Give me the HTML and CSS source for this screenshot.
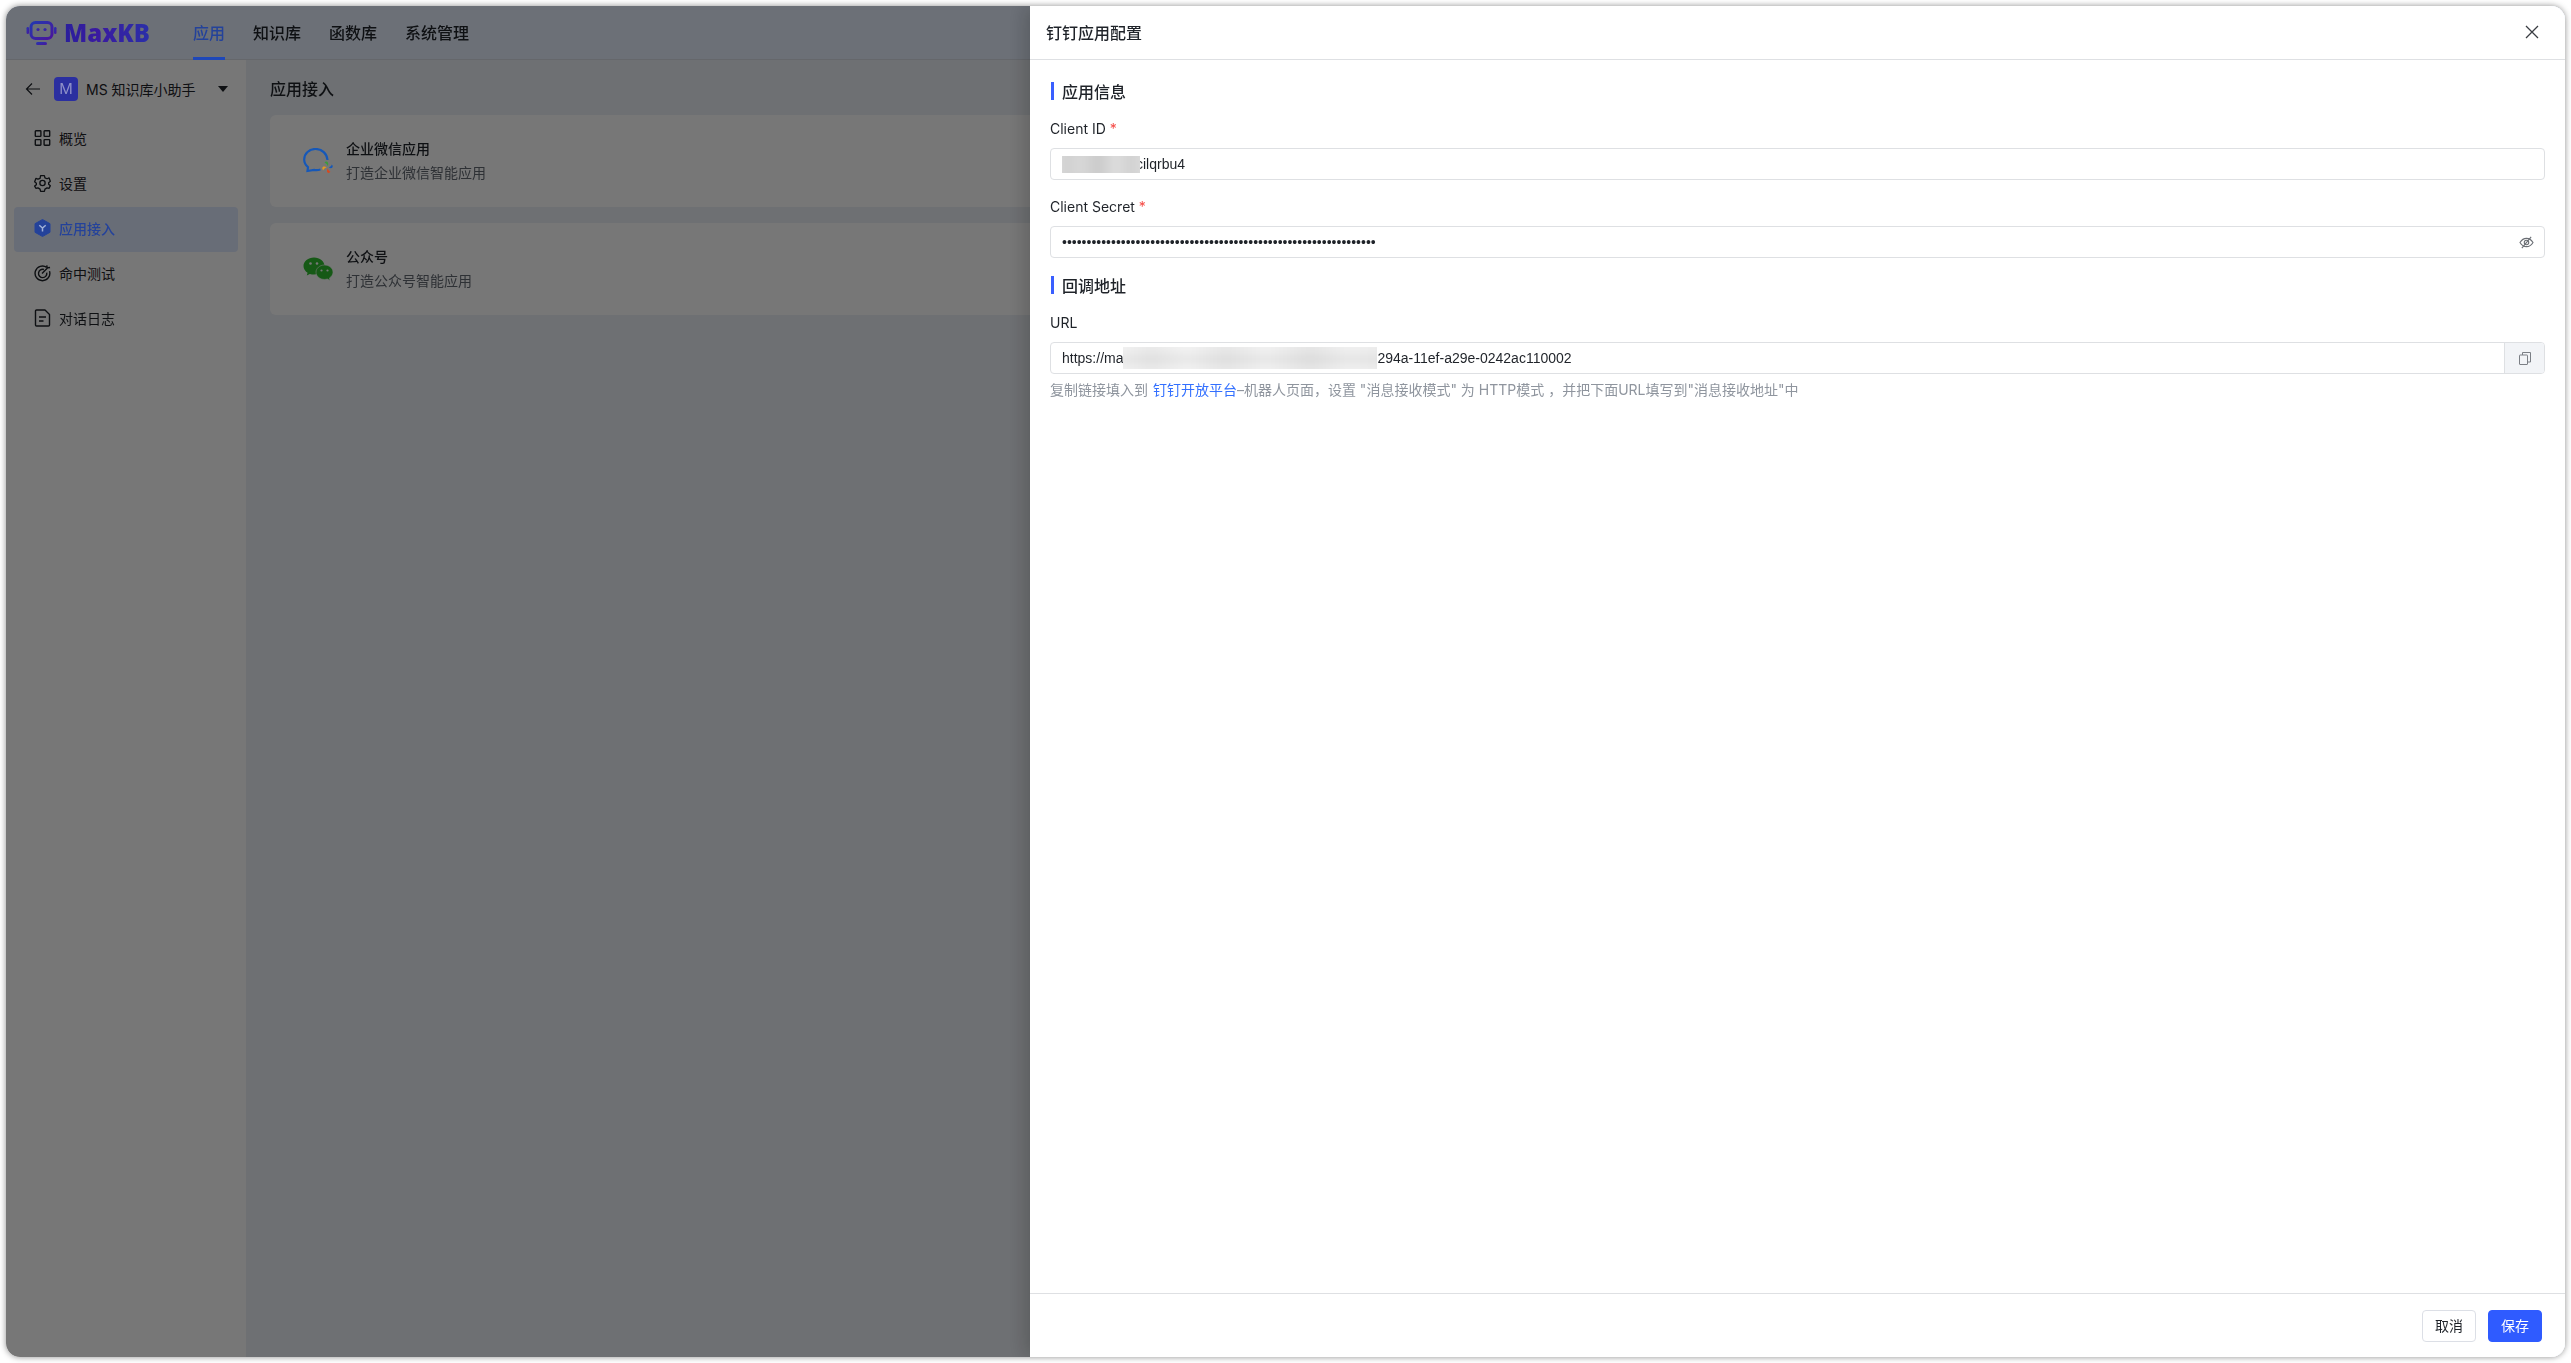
FILE: index.html
```html
<!DOCTYPE html>
<html lang="zh-CN">
<head>
<meta charset="utf-8">
<title>MaxKB</title>
<link rel="stylesheet" href="styles.css">
</head>
<body>
<div class="window">
  <header class="topbar">
    <div class="logo lift">
      <svg class="logo-icon" viewBox="0 0 31 24" width="31" height="24">
        <defs><linearGradient id="lg" x1="0" y1="0" x2="1" y2="1"><stop offset="0" stop-color="#2438b0"/><stop offset="1" stop-color="#4a149c"/></linearGradient></defs>
        <rect x="5" y="1.5" width="21" height="16" rx="4.5" fill="none" stroke="url(#lg)" stroke-width="3"/>
        <rect x="0.5" y="6" width="2.5" height="7" rx="1.2" fill="url(#lg)"/>
        <rect x="28" y="6" width="2.5" height="7" rx="1.2" fill="url(#lg)"/>
        <circle cx="12" cy="8.5" r="1.6" fill="url(#lg)"/>
        <circle cx="19" cy="8.5" r="1.6" fill="url(#lg)"/>
        <path d="M15.5 18v3" stroke="url(#lg)" stroke-width="3"/>
        <rect x="10" y="21" width="11" height="3" rx="1.5" fill="url(#lg)"/>
      </svg>
      <span class="logo-text">MaxKB</span>
    </div>
    <nav class="nav">
      <a class="nav-item is-active lift">应用</a>
      <a class="nav-item">知识库</a>
      <a class="nav-item">函数库</a>
      <a class="nav-item">系统管理</a>
    </nav>
  </header>
  <div class="content">
    <aside class="sidebar">
      <div class="app-switch">
        <svg class="back" viewBox="0 0 16 16" width="16" height="16"><path d="M15 8H1.5M7 2.5 1.5 8 7 13.5" fill="none" stroke="currentColor" stroke-width="1.2"/></svg>
        <span class="avatar lift">M</span>
        <span class="app-name">MS 知识库小助手</span>
        <span class="caret"></span>
      </div>
      <ul class="menu">
        <li class="menu-item">
          <svg viewBox="0 0 16 16" width="16" height="16" fill="none" stroke="currentColor" stroke-width="1.4"><rect x="0.8" y="0.8" width="5.6" height="5.6" rx=".6"/><rect x="9.6" y="0.8" width="5.6" height="5.6" rx=".6"/><rect x="0.8" y="9.6" width="5.6" height="5.6" rx=".6"/><rect x="9.6" y="9.6" width="5.6" height="5.6" rx=".6"/></svg>
          <span>概览</span>
        </li>
        <li class="menu-item">
          <svg viewBox="0 0 18 18" width="18" height="18" fill="none" stroke="currentColor" stroke-width="1.4"><path d="M7 1.2h4l.6 2.3 2.2 1 2.2-.8 1.3 3.5-1.8 1.5v1.6l1.8 1.5-1.3 2.8-2.2-.4-2.2 1.3-.6 2.3H7l-.6-2.3-2.2-1.3-2.2.4L.7 12.3l1.8-1.5V9.2L.7 7.7 2 4.2l2.2.8 2.2-1z" stroke-linejoin="round"/><circle cx="9" cy="9" r="2.8"/></svg>
          <span>设置</span>
        </li>
        <li class="menu-item is-active">
          <svg class="lift" viewBox="0 0 16 18" width="16" height="18"><path d="M8 0.5 15.5 4.7v8.6L8 17.5.5 13.3V4.7z" fill="currentColor" stroke="currentColor" stroke-linejoin="round"/><path d="M4.8 6.2 8 9l3.2-2.800M8 9v3.600" fill="none" stroke="#9fb0d8" stroke-width="1.5"/></svg>
          <span class="lift">应用接入</span>
        </li>
        <li class="menu-item">
          <svg viewBox="0 0 18 18" width="18" height="18" fill="none" stroke="currentColor" stroke-width="1.5"><path d="M13.5 3A7.8 7.8 0 1 0 16.4 7"/><path d="M10.5 5.3a4.4 4.4 0 1 0 3 3.4"/><path d="M8.5 9.5 15 3M13.5 3l.3-2M15 3.5l2-.3"/></svg>
          <span>命中测试</span>
        </li>
        <li class="menu-item">
          <svg viewBox="0 0 16 18" width="16" height="18" fill="none" stroke="currentColor" stroke-width="1.4"><path d="M1 2a1 1 0 0 1 1-1h8.5L15 5.5V16a1 1 0 0 1-1 1H2a1 1 0 0 1-1-1z" stroke-linejoin="round"/><path d="M4.5 8h7M4.5 12h4.5"/></svg>
          <span>对话日志</span>
        </li>
      </ul>
    </aside>
    <main class="main">
      <h2 class="main-title">应用接入</h2>
      <section class="card">
        <svg class="card-icon lift" viewBox="0 0 30 27" width="30" height="27">
          <path d="M24.500 12C24 5.500 19 1 12.500 1 6.200 1 1.200 5.500 1.200 11.500 1.200 15 3 17.500 5 19.200L4.500 23 11 21.800C13.500 22.300 15.500 22 17.500 21.500" fill="none" stroke="#1658b8" stroke-width="2.200"/>
          <path d="M24.800 18.300C24.300 16.500 23 15.300 21.500 14.800 22 13.500 23.300 13 24.300 13.700 25.300 14.500 25.600 16.500 24.800 18.300z" fill="#3c9a3c"/>
          <path d="M25.800 19.300C27.500 18.800 28.300 17.800 28.800 16.500 30 17.500 30 18.800 29.200 19.700 28.400 20.500 27 20.300 25.800 19.300z" fill="#1658b8"/>
          <path d="M24.800 20.300C25.200 22 26.200 23.200 27.500 23.800 26.800 25 25.400 25.300 24.500 24.500 23.600 23.700 23.900 21.900 24.800 20.300z" fill="#d8481e"/>
          <path d="M23.700 19.500C22 19.800 20.800 20.800 20.300 22.200 19.200 21.400 19 20 19.800 19.100 20.700 18.300 22.300 18.500 23.700 19.500z" fill="#e89a1c"/>
        </svg>
        <div class="card-text">
          <div class="card-title">企业微信应用</div>
          <div class="card-desc">打造企业微信智能应用</div>
        </div>
      </section>
      <section class="card">
        <svg class="card-icon" viewBox="0 0 30 24" width="30" height="24">
          <path d="M11 0.500C5.200 0.500.5 4.300.5 9c0 2.800 1.600 5.200 4.100 6.800L3.800 18.500l3.100-1.600c1.300.4 2.700.6 4.100.6 5.800 0 10.500-3.800 10.500-8.500S16.800.5 11 .5z" fill="#2fbf2f"/>
          <path d="M21.500 8C16.800 8 13 11.200 13 15.200s3.800 7.200 8.500 7.200c1 0 2-.2 2.900-.4l2.600 1.500-.6-2.400c2-1.400 3.600-3.500 3.600-5.900C30 11.200 26.200 8 21.500 8z" fill="#2fbf2f" stroke="#fff" stroke-width="0.600"/>
          <circle cx="7.500" cy="6.500" r="1.300" fill="#fff"/><circle cx="14" cy="6.500" r="1.300" fill="#fff"/>
          <circle cx="18.500" cy="13.500" r="1.100" fill="#fff"/><circle cx="24.500" cy="13.500" r="1.100" fill="#fff"/>
        </svg>
        <div class="card-text">
          <div class="card-title">公众号</div>
          <div class="card-desc">打造公众号智能应用</div>
        </div>
      </section>
    </main>
  </div>

  <div class="overlay"></div>

  <aside class="drawer">
    <header class="drawer-head">
      <span class="drawer-title">钉钉应用配置</span>
      <svg class="close" viewBox="0 0 14 14" width="14" height="14"><path d="M1 1l12 12M13 1 1 13" fill="none" stroke="#3a3d42" stroke-width="1.300"/></svg>
    </header>
    <div class="drawer-body">
      <h3 class="section-title">应用信息</h3>
      <div class="field first">
        <label class="field-label">Client ID <i>*</i></label>
        <div class="input">
          <span class="blur blur-id"></span><span>cilqrbu4</span>
        </div>
      </div>
      <div class="field">
        <label class="field-label">Client Secret <i>*</i></label>
        <div class="input">
          <span class="dots">••••••••••••••••••••••••••••••••••••••••••••••••••••••••••••••••</span>
          <svg class="eye" viewBox="0 0 16 14" width="15" height="13" fill="none" stroke="#6b6f75" stroke-width="1.200"><path d="M1 7c1.800-3 4.200-4.500 7-4.500S13.200 4 15 7c-1.800 3-4.200 4.500-7 4.500S2.800 10 1 7z"/><circle cx="8" cy="7" r="2.400"/><path d="M13 1 3 13"/></svg>
        </div>
      </div>
      <h3 class="section-title second">回调地址</h3>
      <div class="field first">
        <label class="field-label">URL</label>
        <div class="input has-addon">
          <div class="input-inner">
            <span>https://ma</span><span class="blur blur-url"></span><span>294a-11ef-a29e-0242ac110002</span>
          </div>
          <div class="addon">
            <svg viewBox="0 0 12 13" width="12" height="13" fill="none" stroke="#7b7f85" stroke-width="1"><rect x="0.500" y="3" width="8" height="9.500" rx=".5"/><path d="M3.500 3V.5h8v9.500H8.500"/></svg>
          </div>
        </div>
        <p class="hint">复制链接填入到 <a class="link">钉钉开放平台</a>–机器人页面，设置 "消息接收模式" 为 HTTP模式 ，并把下面URL填写到"消息接收地址"中</p>
      </div>
    </div>
    <footer class="drawer-foot">
      <button class="btn">取消</button>
      <button class="btn btn-primary">保存</button>
    </footer>
  </aside>
</div>
</body>
</html>
```
FILE: styles.css
```css
* { box-sizing: border-box; }
html, body { height: 100%; }
body {
  margin: 0;
  background: #fff;
  font-family: Inter, "Noto Sans CJK SC", sans-serif;
  color: #1f2329;
  overflow: hidden;
}
body::before {
  content: "";
  position: fixed;
  inset: 6px;
  border-radius: 14px;
  box-shadow: 0 0 6px rgba(0, 0, 0, .45);
}
.window {
  position: relative;
  margin: 6px;
  height: calc(100vh - 12px);
  border-radius: 14px;
  overflow: hidden;
  display: flex;
  flex-direction: column;
  background: #fff;
}
.lift { position: relative; z-index: 2; }
.topbar {
  height: 54px;
  flex: none;
  display: flex;
  align-items: stretch;
  padding-left: 20px;
  background: #e7f0ff;
  border-bottom: 1px solid #d8dde6;
}
.logo { display: flex; align-items: center; width: 161px; flex: none; }
.logo-icon { flex: none; }
.logo-text {
  margin-left: 7px;
  font-family: "Open Sans", sans-serif;
  font-size: 24px;
  font-weight: 800;
  line-height: 1;
  background: linear-gradient(90deg, #2a1f9c, #3a1aa0 40%, #2a2fa8);
  -webkit-background-clip: text;
  background-clip: text;
  color: transparent;
}
.nav { display: flex; gap: 28px; margin-left: 6px; }
.nav-item {
  position: relative;
  display: flex;
  align-items: center;
  font-size: 16px;
  font-weight: 500;
  padding: 0 0 2px;
  color: #1f2329;
}
.nav-item.is-active { color: #24429a; }
.nav-item.is-active::after {
  content: "";
  position: absolute;
  left: 0; right: 0; bottom: -1px;
  height: 3px;
  background: #1e47b8;
}
.content { flex: 1; display: flex; min-height: 0; }
.sidebar { width: 240px; flex: none; background: #fff; padding: 0 8px; }
.app-switch {
  display: flex;
  align-items: center;
  height: 24px;
  margin-top: 17px;
  padding: 0 0 1px 11px;
  font-size: 14px;
}
.back { flex: none; color: #1f2329; }
.avatar {
  width: 24px; height: 24px;
  margin-left: 13px;
  flex: none;
  border-radius: 4px;
  background: #2b2fa0;
  color: #8e90c8;
  font-size: 15px;
  display: flex; align-items: center; justify-content: center;
}
.app-name { margin-left: 8px; white-space: nowrap; width: 132px; flex: none; }
.caret {
  width: 0; height: 0;
  border-left: 5px solid transparent;
  border-right: 5px solid transparent;
  border-top: 6px solid #1f2329;
}
.menu { list-style: none; margin: 16px 0 0; padding: 0; }
.menu-item {
  height: 45px;
  display: flex;
  align-items: center;
  border-radius: 4px;
  font-size: 14px;
  padding: 0 0 3px 20px;
  gap: 8px;
}
.menu-item svg { flex: none; width: 17px; }
.menu-item.is-active { background: #dfe9ff; color: #24429a; font-weight: 500; }
.main { flex: 1; padding: 0 24px; background: #ecf0f6; min-width: 0; }
.main-title { margin: 18px 0 0; font-size: 16px; font-weight: 500; line-height: 22px; }
.card {
  display: flex;
  align-items: center;
  height: 92px;
  margin-top: 16px;
  background: #fff;
  border-radius: 6px;
  padding-left: 33px;
}
.main-title + .card { margin-top: 15px; }
.card-icon { flex: none; }
.card-text { margin-left: 13px; }
.card-title { font-size: 14px; font-weight: 500; line-height: 20px; }
.card-desc { font-size: 14px; line-height: 20px; margin-top: 4px; color: #646a73; }
.overlay {
  position: absolute;
  inset: 0;
  z-index: 1;
  background: rgba(0, 0, 0, .533);
}
.drawer {
  position: absolute;
  z-index: 3;
  top: 0; right: 0; bottom: 0;
  width: 1535px;
  background: #fff;
  display: flex;
  flex-direction: column;
  box-shadow: -6px 0 18px rgba(0, 0, 0, .18);
}
.drawer-head {
  height: 54px;
  flex: none;
  display: flex;
  align-items: center;
  justify-content: space-between;
  padding: 0 26px 2px 16px;
  border-bottom: 1px solid #dee0e3;
}
.drawer-title { font-size: 16px; font-weight: 500; }
.close { flex: none; }
.drawer-body { flex: 1; padding: 22px 20px 0; min-height: 0; }
.section-title {
  margin: 0 0 0 1px;
  height: 18px;
  display: flex;
  align-items: center;
  font-size: 16px;
  font-weight: 500;
  border-left: 3px solid #3a5fff;
  padding: 0 0 1px 8px;
}
.section-title.second { margin-top: 18px; }
.field { margin-top: 17px; }
.field.first { margin-top: 19px; }
.field-label { display: block; font-size: 14px; line-height: 20px; margin-bottom: 9px; color: #1f2329; }
.field-label i { font-style: normal; color: #f54a45; }
.input {
  height: 32px;
  display: flex;
  align-items: center;
  border: 1px solid #dee0e3;
  border-radius: 4px;
  padding: 0 11px;
  font-family: "Liberation Sans", sans-serif;
  font-size: 14px;
  color: #1f2329;
}
.input.has-addon { padding: 0; }
.input-inner { flex: 1; display: flex; align-items: center; padding: 0 11px; min-width: 0; }
.blur { position: relative; z-index: 1; display: block; overflow: hidden; flex: none; }
.blur::before {
  content: "";
  position: absolute;
  inset: -10px;
  filter: blur(5px);
}
.blur-id { width: 78px; height: 17px; margin-right: -4px; background: #dcdcdc; }
.blur-id::before {
  background: linear-gradient(90deg, #ececec 0, #cfcfcf 12%, #d8d8d8 30%, #c9c9c9 48%, #dedede 64%, #d0d0d0 82%, #e4e4e4 100%);
}
.blur-url { width: 254px; height: 22px; background: #f1f1f1; }
.blur-url::before {
  background:
    linear-gradient(180deg, transparent 0 17px, rgba(0,0,0,.05) 17px 27px, transparent 27px),
    linear-gradient(90deg, #f4f4f4 0, #eaeaea 14%, #f3f3f3 27%, #e8e8e8 41%, #f2f2f2 56%, #e6e6e6 72%, #f1f1f1 86%, #ececec 100%);
}
.dots { flex: 1; white-space: nowrap; }
.eye { flex: none; margin-right: -1px; }
.addon {
  width: 40px;
  height: 100%;
  flex: none;
  display: flex;
  align-items: center;
  justify-content: center;
  padding-left: 1px;
  background: #f2f4f7;
  border-left: 1px solid #dee0e3;
  border-radius: 0 3px 3px 0;
}
.hint { margin: 6px 0 0; font-size: 14px; line-height: 20px; color: #8f959e; white-space: nowrap; }
.link { color: #3370ff; margin-left: 1px; }
.drawer-foot {
  height: 64px;
  flex: none;
  display: flex;
  justify-content: flex-end;
  align-items: flex-start;
  gap: 12px;
  padding: 16px 23px 0 0;
  border-top: 1px solid #dee0e3;
}
.btn {
  width: 54px;
  height: 32px;
  border: 1px solid #dcdfe6;
  border-radius: 4px;
  background: #fff;
  color: #1f2329;
  font-family: inherit;
  font-size: 14px;
  padding: 0 0 2px;
}
.btn-primary { background: #2f5bff; border-color: #2f5bff; color: #fff; }
```
